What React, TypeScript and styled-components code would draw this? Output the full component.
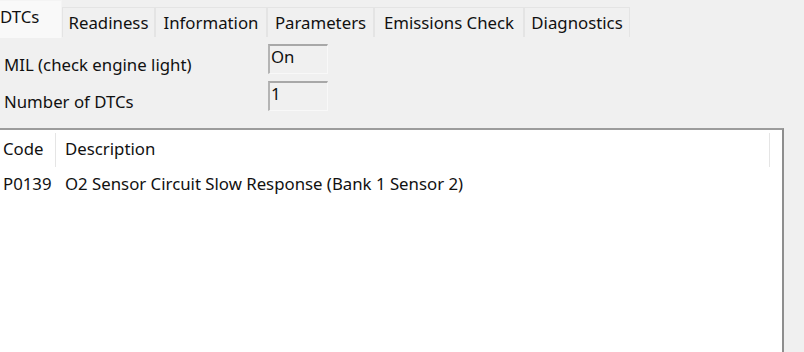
import React from "react";
import styled, { createGlobalStyle } from "styled-components";

const tabs = [
    { label: "DTCs", width: 62 },
    { label: "Readiness", width: 93 },
    { label: "Information", width: 112 },
    { label: "Parameters", width: 107 },
    { label: "Emissions Check", width: 150 },
    { label: "Diagnostics", width: 106 },
];

const dtcs = [
    { code: "P0139", description: "O2 Sensor Circuit Slow Response (Bank 1 Sensor 2)" },
];

const App = () => {
    return (
        <Window>
            <GlobalStyle />
            <TabStrip>
                {tabs.map((tab, index) => (
                    <Tab key={tab.label} $active={index === 0} $width={tab.width}>
                        {tab.label}
                    </Tab>
                ))}
            </TabStrip>
            <Panel>
                <Fields>
                    <FieldRow>
                        <Label>MIL (check engine light)</Label>
                        <ValueBox>On</ValueBox>
                    </FieldRow>
                    <FieldRow>
                        <Label>Number of DTCs</Label>
                        <ValueBox>1</ValueBox>
                    </FieldRow>
                </Fields>
                <ListWrap>
                    <ListView>
                        <HeaderRow>
                            <HeaderCell $width={56}>Code</HeaderCell>
                            <HeaderCell $width={714}>Description</HeaderCell>
                        </HeaderRow>
                        {dtcs.map((dtc) => (
                            <ItemRow key={dtc.code}>
                                <Cell $width={56}>{dtc.code}</Cell>
                                <Cell $width={714}>{dtc.description}</Cell>
                            </ItemRow>
                        ))}
                    </ListView>
                    <Gutter />
                </ListWrap>
            </Panel>
        </Window>
    );
};

export default App;

const GlobalStyle = createGlobalStyle`
    html, body {
        margin: 0;
        padding: 0;
        background: #f0f0f0;
        overflow: hidden;
    }
    body {
        font-family: "Noto Sans", "Open Sans", sans-serif;
        font-size: 16.8px;
        color: #111111;
    }
`;

const Window = styled.div`
    width: 804px;
    height: 352px;
    display: flex;
    flex-direction: column;
    background: #f0f0f0;
    overflow: hidden;
`;

const TabStrip = styled.div`
    height: 38px;
    display: flex;
    align-items: flex-end;
`;

const Tab = styled.div<{ $active?: boolean; $width: number }>`
    width: ${(p) => p.$width}px;
    height: ${(p) => (p.$active ? 38 : 30)}px;
    box-sizing: border-box;
    display: flex;
    align-items: center;
    justify-content: ${(p) => (p.$active ? "flex-start" : "center")};
    padding-bottom: ${(p) => (p.$active ? 6 : 0)}px;
    margin-bottom: ${(p) => (p.$active ? 0 : 1)}px;
    background: ${(p) => (p.$active ? "#f9f9f9" : "#f0f0f0")};
    border: 1px solid ${(p) => (p.$active ? "#f4f4f4" : "#e4e4e4")};
    border-left: ${(p) => (p.$active ? "none" : "1px solid #e4e4e4")};
    border-bottom: none;
    white-space: nowrap;
`;

const Panel = styled.div`
    flex: 1;
    display: flex;
    flex-direction: column;
    min-height: 0;
`;

const Fields = styled.div`
    height: 90px;
    display: flex;
    flex-direction: column;
    padding-top: 6px;
    gap: 7px;
    box-sizing: border-box;
`;

const FieldRow = styled.div`
    display: flex;
    align-items: flex-start;
    height: 30px;
`;

const Label = styled.div`
    width: 268px;
    padding-left: 4px;
    padding-top: 10px;
    box-sizing: border-box;
    line-height: 22px;
`;

const ValueBox = styled.div`
    width: 60px;
    height: 30px;
    box-sizing: border-box;
    border-top: 2px solid #a8a8a8;
    border-left: 2px solid #b4b4b4;
    border-right: 1px solid #f8f8f8;
    border-bottom: 1px solid #f8f8f8;
    padding-left: 1px;
    line-height: 22px;
    background: #f0f0f0;
`;

const ListWrap = styled.div`
    flex: 1;
    display: flex;
    min-height: 0;
`;

const ListView = styled.div`
    width: 784px;
    box-sizing: border-box;
    background: #ffffff;
    border-top: 2px solid #9c9c9c;
    border-right: 2px solid #8e8e8e;
    display: flex;
    flex-direction: column;
`;

const Gutter = styled.div`
    flex: 1;
    background: #f0f0f0;
`;

const HeaderRow = styled.div`
    height: 37px;
    display: flex;
    align-items: stretch;
    padding-top: 3px;
    box-sizing: border-box;
`;

const HeaderCell = styled.div<{ $width: number }>`
    width: ${(p) => p.$width}px;
    box-sizing: border-box;
    padding-left: 3px;
    display: flex;
    align-items: center;
    padding-bottom: 4px;
    border-right: 1px solid #e5e5e5;
    white-space: nowrap;
    & + & {
        padding-left: 9px;
    }
`;

const ItemRow = styled.div`
    height: 32px;
    display: flex;
    align-items: center;
`;

const Cell = styled.div<{ $width: number }>`
    width: ${(p) => p.$width}px;
    box-sizing: border-box;
    padding-left: 3px;
    white-space: nowrap;
    & + & {
        padding-left: 9px;
    }
`;
